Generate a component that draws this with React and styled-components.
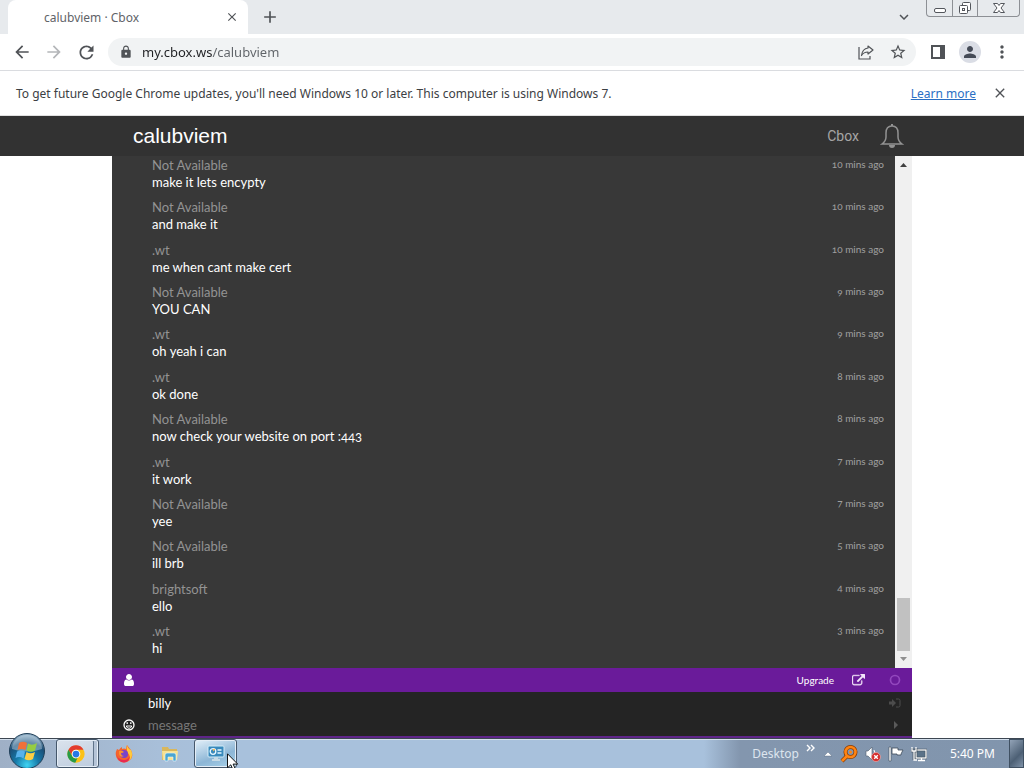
import React, { useState } from 'react';
import styled, { createGlobalStyle, css } from 'styled-components';
import {
  MdArrowBack,
  MdArrowForward,
  MdRefresh,
  MdLock,
  MdStarBorder,
  MdPerson,
  MdMoreVert,
  MdClose,
  MdAdd,
  MdKeyboardArrowDown,
} from 'react-icons/md';

const messages = [
  { id: 1, name: 'Not Available', text: 'make it lets encypty', time: '10 mins ago' },
  { id: 2, name: 'Not Available', text: 'and make it', time: '10 mins ago' },
  { id: 3, name: '.wt', text: 'me when cant make cert', time: '10 mins ago' },
  { id: 4, name: 'Not Available', text: 'YOU CAN', time: '9 mins ago' },
  { id: 5, name: '.wt', text: 'oh yeah i can', time: '9 mins ago' },
  { id: 6, name: '.wt', text: 'ok done', time: '8 mins ago' },
  { id: 7, name: 'Not Available', text: 'now check your website on port :443', time: '8 mins ago' },
  { id: 8, name: '.wt', text: 'it work', time: '7 mins ago' },
  { id: 9, name: 'Not Available', text: 'yee', time: '7 mins ago' },
  { id: 10, name: 'Not Available', text: 'ill brb', time: '5 mins ago' },
  { id: 11, name: 'brightsoft', text: 'ello', time: '4 mins ago' },
  { id: 12, name: '.wt', text: 'hi', time: '3 mins ago' },
];

const Browser = () => {
  const [url, setUrl] = useState('my.cbox.ws/calubviem');

  return (
    <>
      <TabStrip>
        <Tab>
          <TabTitle>calubviem · Cbox</TabTitle>
          <IconButton aria-label="Close tab" $size={16}><MdClose size={14} /></IconButton>
        </Tab>
        <NewTab aria-label="New tab" $size={28}><MdAdd size={20} /></NewTab>
        <TabSearch aria-label="Search tabs" $size={24}><MdKeyboardArrowDown size={18} /></TabSearch>
        <WindowButtons>
          <WindowButton aria-label="Minimize">
            <svg width="14" height="16" fill="#fff" stroke="#53565c">
              <rect x="1.5" y="8.5" width="11" height="4" rx="1.5" />
            </svg>
          </WindowButton>
          <WindowButton aria-label="Restore">
            <svg width="14" height="16" fill="#fff" stroke="#53565c">
              <rect x="4.5" y="2.5" width="8" height="8" rx="1" />
              <rect x="1.5" y="5.5" width="8" height="8" rx="1" />
              <rect x="4.5" y="8.5" width="2" height="2" />
            </svg>
          </WindowButton>
          <WindowButton aria-label="Close" $wide>
            <svg width="14" height="16" fill="#fff" stroke="#53565c">
              <path d="M1.500 3.500h4L7 5.500l1.500-2h4L9 8l3.500 4.500h-4L7 10.500l-1.500 2h-4L5 8z" />
            </svg>
          </WindowButton>
        </WindowButtons>
      </TabStrip>
      <Toolbar>
        <IconButton aria-label="Back" $size={32}><MdArrowBack size={20} /></IconButton>
        <IconButton aria-label="Forward" $size={32} $dim><MdArrowForward size={20} /></IconButton>
        <IconButton aria-label="Reload" $size={32}><MdRefresh size={21} /></IconButton>
        <AddressBar>
          <MdLock size={14} />
          <AddressInput aria-label="Address" value={url} onChange={(e) => setUrl(e.target.value)} />
          <IconButton aria-label="Share" $size={32}>
            <svg width="18" height="18" fill="none" stroke="currentColor" strokeWidth="1.2">
              <path d="M2 4v12h11v-3" />
              <path d="M11 3 16 7 11 11V9C8 9 6 10 4.500 12.500 5 8.500 7 5.500 11 5z" strokeLinejoin="round" />
            </svg>
          </IconButton>
          <IconButton aria-label="Bookmark" $size={32}><MdStarBorder size={18} /></IconButton>
        </AddressBar>
        <IconButton aria-label="Side panel" $size={32}>
          <svg width="16" height="14" fill="currentColor">
            <path d="M1 0h14v14H1zM3 2v10h7V2z" fillRule="evenodd" />
          </svg>
        </IconButton>
        <Avatar aria-label="Profile" $size={22}><MdPerson size={18} /></Avatar>
        <IconButton aria-label="Menu" $size={32}><MdMoreVert size={20} /></IconButton>
      </Toolbar>
      <InfoBar>
        <span>
          To get future Google Chrome updates, you'll need Windows 10 or later. This computer is using Windows 7.
        </span>
        <LearnMore href="#learn">Learn more</LearnMore>
        <IconButton aria-label="Dismiss" $size={16}><MdClose size={18} /></IconButton>
      </InfoBar>
    </>
  );
};

const Chat = () => {
  const [name, setName] = useState('billy');
  const [message, setMessage] = useState('');

  return (
    <ChatBox>
      <MessageArea>
        <MessageList>
          {messages.map((m) => (
            <Message key={m.id}>
              <Author>{m.name}</Author>
              <Time>{m.time}</Time>
              <Body>{m.text}</Body>
            </Message>
          ))}
        </MessageList>
        <ScrollTrack>
          <ScrollArrow><path d="M5 11 8.500 7 12 11z" fill="#404040" /></ScrollArrow>
          <ScrollThumb />
          <ScrollArrow><path d="M5 6h7l-3.500 4z" fill="#8f8f8f" /></ScrollArrow>
        </ScrollTrack>
      </MessageArea>
      <ActionBar>
        <PlainButton aria-label="Profile">
          <svg width="14" height="14" viewBox="0 0 1792 1792" fill="#fff">
            <path d="M1536 1399q0 109-62.500 187t-150.500 78h-854q-88 0-150.500-78t-62.500-187q0-85 8.500-160.500t31.500-152 58.500-131 94-89 134.500-34.500q131 128 313 128t313-128q76 0 134.500 34.500t94 89 58.500 131 31.500 152 8.500 160.500zm-256-887q0 159-112.500 271.500t-271.500 112.500-271.500-112.500-112.500-271.500 112.500-271.500 271.500-112.500 271.500 112.500 112.500 271.500z" />
          </svg>
        </PlainButton>
        <Upgrade href="#upgrade">Upgrade</Upgrade>
        <PlainButton aria-label="Open in new window">
          <svg width="13" height="13" viewBox="0 0 1792 1792" fill="#f3e6fa">
            <path d="M1408 928v320q0 119-84.500 203.500t-203.500 84.500h-832q-119 0-203.500-84.500t-84.500-203.500v-832q0-119 84.500-203.500t203.500-84.500h704q14 0 23 9t9 23v64q0 14-9 23t-23 9h-704q-66 0-113 47t-47 113v832q0 66 47 113t113 47h832q66 0 113-47t47-113v-320q0-14 9-23t23-9h64q14 0 23 9t9 23zm384-864v512q0 26-19 45t-45 19-45-19l-176-176-652 652q-10 10-23 10t-23-10l-114-114q-10-10-10-23t10-23l652-652-176-176q-19-19-19-45t19-45 45-19h512q26 0 45 19t19 45z" stroke="#f3e6fa" strokeWidth="50" />
          </svg>
        </PlainButton>
        <PlainButton aria-label="Status">
          <svg width="12" height="12" fill="none" stroke="#9247bd" strokeWidth="1.700">
            <circle cx="6" cy="6" r="4.500" />
          </svg>
        </PlainButton>
      </ActionBar>
      <PostForm onSubmit={(e) => e.preventDefault()}>
        <FormRow>
          <span />
          <Field aria-label="Name" value={name} onChange={(e) => setName(e.target.value)} />
          <PlainButton type="button" aria-label="Log in">
            <svg width="12" height="10" fill="#4c4c4c">
              <path d="M0 3.500h3V1l4 4-4 4V6.500H0z" />
              <path d="M7 1h2.500Q11 1 11 2.500v5Q11 9 9.500 9H7" fill="none" stroke="#4c4c4c" />
            </svg>
          </PlainButton>
        </FormRow>
        <FormRow>
          <SmileyButton type="button" aria-label="Smilies">
            <svg width="12" height="12" fill="none" stroke="#fff" strokeWidth="1.300">
              <circle cx="6" cy="6" r="5" />
              <path d="M3.200 7Q6 7 8.800 7 8 9.300 6 9.300T3.200 7z" strokeWidth="1" />
              <path d="M4.200 3.300v1.800M7.800 3.300v1.800" />
            </svg>
          </SmileyButton>
          <Field
            aria-label="Message"
            placeholder="message"
            value={message}
            onChange={(e) => setMessage(e.target.value)}
          />
          <PlainButton aria-label="Send">
            <svg width="6" height="10" fill="#5a5a5a"><path d="M2 1l4 4-4 4z" /></svg>
          </PlainButton>
        </FormRow>
      </PostForm>
    </ChatBox>
  );
};

const StartOrb = () => (
  <svg width="38" height="38" viewBox="0 0 38 38">
    <defs>
      <radialGradient id="orb" cx="50%" cy="90%" r="85%">
        <stop offset="0" stopColor="#3fd4f2" />
        <stop offset=".4" stopColor="#1679a8" />
        <stop offset=".75" stopColor="#1c4f78" />
        <stop offset="1" stopColor="#8aa9c0" />
      </radialGradient>
    </defs>
    <circle cx="19" cy="19" r="17.500" fill="url(#orb)" stroke="#203f58" />
    <path d="M4 17a15 14 0 0 1 30 0q-15 5-30 0z" fill="#dcecf5" opacity=".4" />
    <path d="M11 11q4-2.500 8 0l-1.500 7q-4-2-8 0z" fill="#f0713a" />
    <path d="M20 11.500q4 2.500 9-.5l-2 7.500q-4 2.500-8.500 0z" fill="#96cd43" />
    <path d="M9 19.500q4-2 8 0l-1.500 7q-4-2.500-8-.5z" fill="#58b2ec" />
    <path d="M18.500 20q4 2.500 8.500 0l-2 7q-4 2.500-8.500 0z" fill="#fdce43" />
  </svg>
);

const ChromeLogo = () => (
  <svg width="18" height="18" viewBox="0 0 48 48">
    <circle cx="24" cy="24" r="23" fill="#fbc116" />
    <path d="M4 12.500A23 23 0 0 1 44 12.500H24a11.500 11.500 0 0 0-10 17.200z" fill="#e33b2e" />
    <path d="M4 12.500 14 29.700A11.500 11.500 0 0 0 28 34.800L22 47A23 23 0 0 1 4 12.500z" fill="#269b48" />
    <circle cx="24" cy="24" r="11.500" fill="#fff" />
    <circle cx="24" cy="24" r="9" fill="#2878e6" />
  </svg>
);

const FirefoxLogo = () => (
  <svg width="18" height="18" viewBox="0 0 18 18">
    <path d="M2 4l2 1q1-2 3-3l0 2q2-1 4 0 0-2 1-4 2 3 4 5 3 7-1 10-6 5-12 0Q-1 10 2 4z" fill="#f5642c" />
    <path d="M12 0q1 4 4 5 3 7-2 11 2-5-1-8-2-3-1-8z" fill="#ffc93a" />
    <path d="M1 7q1 8 8 8 4 0 6-4-1 6-6 6.500Q2 17 1 7z" fill="#e92b52" />
    <circle cx="9" cy="9" r="4" fill="#7944c9" />
    <path d="M4 6q3-1 5 1-1 1-3 1 0 3 3 3-4 2-5-2z" fill="#fa9230" />
  </svg>
);

const ExplorerLogo = () => (
  <svg width="18" height="16" viewBox="0 0 18 16">
    <path d="M1 1h6l1 2h8v11H1z" fill="#d9b75c" />
    <path d="M1 5h16l-1 9H2z" fill="#f7e293" />
    <path d="M4 15V9q0-2 2-2h7q2 0 2 2v6h-3v-4H7v4z" fill="#4aa5d0" stroke="#eaf8ff" strokeWidth=".6" />
  </svg>
);

const ControlPanelLogo = () => (
  <svg width="18" height="17" viewBox="0 0 18 17">
    <rect x="1" y="1" width="16" height="11" rx="1" fill="#398abc" stroke="#d6eef9" />
    <circle cx="6" cy="6.500" r="2.800" fill="none" stroke="#e8f7ff" strokeWidth="1.300" />
    <path d="M6 6.500V4h2.500z" fill="#ffb94a" />
    <path d="M10.500 5h4M10.500 8h4" stroke="#e8f7ff" strokeWidth="1.300" />
    <path d="M7 12h4v2h2v2H5v-2h2z" fill="#c8dbe6" />
  </svg>
);

const Taskbar = () => (
  <Bar>
    <StartButton aria-label="Start"><StartOrb /></StartButton>
    <Tasks>
      <TaskButton aria-label="Google Chrome" $open $stacked><ChromeLogo /></TaskButton>
      <TaskButton aria-label="Firefox"><FirefoxLogo /></TaskButton>
      <TaskButton aria-label="Explorer"><ExplorerLogo /></TaskButton>
      <TaskButton aria-label="Control Panel" $open $active>
        <ControlPanelLogo />
        <Cursor width="12" height="18" viewBox="0 0 12 18">
          <path d="M.5.8v14l3.300-3 2.300 5.300 2.300-1-2.300-5h4.600z" fill="#fff" stroke="#111" />
        </Cursor>
      </TaskButton>
    </Tasks>
    <Tray>
      <DesktopLabel>Desktop</DesktopLabel>
      <TrayButton aria-label="More toolbars" $top>
        <svg width="9" height="8" fill="none" stroke="#fff" strokeWidth="1.400"><path d="M1 1l3 3-3 3M5 1l3 3-3 3" /></svg>
      </TrayButton>
      <TrayButton aria-label="Show hidden icons">
        <svg width="8" height="6" fill="#fff"><path d="M0 5l4-4 4 4z" stroke="#4d6177" strokeWidth=".4" /></svg>
      </TrayButton>
      <TrayButton aria-label="Search tool">
        <svg width="18" height="18" fill="none">
          <circle cx="10.500" cy="7" r="5" stroke="#8a3b00" strokeWidth="4" />
          <path d="M7 11l-5 5" stroke="#8a3b00" strokeWidth="4" />
          <circle cx="10.500" cy="7" r="5" stroke="#ff8412" strokeWidth="2.600" />
          <path d="M7 11l-5 5" stroke="#ff8412" strokeWidth="2.600" />
          <circle cx="10.500" cy="7" r="1.500" fill="#ff8412" />
        </svg>
      </TrayButton>
      <TrayButton aria-label="Volume">
        <svg width="16" height="16" fill="none">
          <path d="M1 5h2l4-4v13l-4-4H1z" fill="#fff" stroke="#4e5d6c" strokeWidth=".6" />
          <path d="M9 4q2 3 0 7" stroke="#fff" />
          <circle cx="11" cy="11" r="4.500" fill="#d42d2d" stroke="#f7b8b3" strokeWidth=".6" />
          <path d="M9.200 9.200l3.600 3.600m0-3.600l-3.600 3.600" stroke="#fff" strokeWidth="1.400" />
        </svg>
      </TrayButton>
      <TrayButton aria-label="Action center">
        <svg width="16" height="16">
          <path d="M1 1h2v14H1z" fill="#fff" stroke="#3c4a58" strokeWidth=".6" />
          <path d="M4 2h6v2h5l-2 4v1H9V8H4z" fill="#fff" stroke="#3c4a58" strokeWidth=".8" />
        </svg>
      </TrayButton>
      <TrayButton aria-label="Network">
        <svg width="16" height="16" fill="none">
          <rect x="5" y="4" width="10" height="8" fill="#5b7288" stroke="#3c4a58" strokeWidth="2.400" />
          <rect x="5" y="4" width="10" height="8" stroke="#fff" strokeWidth="1.300" />
          <path d="M7 14.500h7M10.500 12v2" stroke="#fff" strokeWidth="1.300" />
          <path d="M1 2v3h4V2M3 5v9" stroke="#3c4a58" strokeWidth="2.600" />
          <path d="M1 1v4h4V1M3 5v9h3" stroke="#fff" strokeWidth="1.300" />
        </svg>
      </TrayButton>
      <Clock>5:40 PM</Clock>
      <ShowDesktop aria-label="Show desktop" />
    </Tray>
  </Bar>
);

const App = () => (
  <>
    <GlobalStyle />
    <Screen>
      <Browser />
      <SiteHeader>
        <SiteInner>
          <SiteTitle>calubviem</SiteTitle>
          <SiteLink href="#cbox">Cbox</SiteLink>
          <PlainButton aria-label="Notifications">
            <svg width="24" height="26" fill="none" stroke="#929292" strokeWidth="1.500">
              <path d="M12 3C7 3 6 7 6 10v4q0 4-4 7h20q-4-3-4-7v-4c0-3-1-7-6-7z" />
              <path d="M12 1v2" strokeWidth="2" />
              <path d="M9 22q0 3 3 3t3-3z" fill="#929292" stroke="none" />
            </svg>
          </PlainButton>
        </SiteInner>
      </SiteHeader>
      <Chat />
      <Taskbar />
    </Screen>
  </>
);

const GlobalStyle = createGlobalStyle`
  * {
    box-sizing: border-box;
  }
  body {
    margin: 0;
    overflow: hidden;
    background: #fff;
    font-family: 'Noto Sans', sans-serif;
    font-size: 12px;
  }
  button, input {
    font: inherit;
    border: none;
    padding: 0;
    background: none;
  }
`

const Screen = styled.div`
  height: 100vh;
  display: flex;
  flex-direction: column;
`

const center = css`
  display: flex;
  align-items: center;
  justify-content: center;
`

const PlainButton = styled.button`
  ${center}
`

const SmileyButton = styled(PlainButton)`
  justify-self: start;
`

const IconButton = styled.button`
  ${center}
  flex: none;
  width: ${(props) => props.$size}px;
  height: ${(props) => props.$size}px;
  color: ${(props) => (props.$dim ? '#b4b6b9' : '#505357')};
`

const TabStrip = styled.div`
  display: flex;
  height: 34px;
  flex: none;
  padding-left: 8px;
  background: #e7eaed;
`

const Tab = styled.div`
  display: flex;
  align-items: center;
  width: 240px;
  padding: 0 8px 0 36px;
  background: #fff;
  border-radius: 8px 8px 0 0;
`

const TabTitle = styled.span`
  flex: 1;
  color: #5f6368;
`

const NewTab = styled(IconButton)`
  align-self: center;
  margin-left: 8px;
`

const TabSearch = styled(IconButton)`
  align-self: center;
  margin-left: auto;
`

const WindowButtons = styled.div`
  display: flex;
  height: 17px;
  margin: 0 4px 0 10px;
  border: 1px solid #8d9095;
  border-top: none;
  border-radius: 0 0 4px 4px;
`

const WindowButton = styled.button`
  ${center}
  width: ${(props) => (props.$wide ? '42px' : '25px')};
  & + & {
    border-left: 1px solid #8d9095;
  }
`

const Toolbar = styled.div`
  display: flex;
  align-items: center;
  flex: none;
  height: 37px;
  padding: 0 6px;
  background: #fff;
  border-bottom: 1px solid #dadce0;
`

const AddressBar = styled.div`
  display: flex;
  align-items: center;
  flex: 1;
  height: 28px;
  margin: 0 6px;
  padding: 0 2px 0 11px;
  background: #f1f3f4;
  border-radius: 14px;
  color: #505357;
`

const AddressInput = styled.input`
  flex: 1;
  min-width: 0;
  margin-left: 9px;
  font-size: 13px;
  color: transparent;
  background: linear-gradient(90deg, #202124 70px, #5f6368 70px);
  background-clip: text;
`

const Avatar = styled(IconButton)`
  margin: 0 5px;
  border-radius: 50%;
  background: #dadde5;
  color: #454b57;
`

const InfoBar = styled.div`
  display: flex;
  align-items: center;
  flex: none;
  height: 45px;
  padding: 0 16px;
  gap: 16px;
  border-bottom: 1px solid #e0e0e0;
  background: #fff;
  color: #3c4043;
`

const LearnMore = styled.a`
  margin-left: auto;
  color: #2a6fc4;
`

const SiteHeader = styled.header`
  flex: none;
  background: #323232;
`

const SiteInner = styled.div`
  display: flex;
  align-items: center;
  max-width: 800px;
  height: 40px;
  margin: 0 auto;
  padding: 0 8px 0 21px;
  font-family: 'Liberation Sans', Arial, sans-serif;
`

const SiteTitle = styled.h1`
  flex: 1;
  margin: 0;
  font-size: 21px;
  font-weight: normal;
  color: #fff;
`

const SiteLink = styled.a`
  margin-right: 21px;
  font-size: 14px;
  font-family: Roboto, sans-serif;
  color: #a6a6a6;
  text-decoration: none;
`

const ChatBox = styled.main`
  display: flex;
  flex-direction: column;
  flex: 1;
  min-height: 0;
  width: 100%;
  max-width: 800px;
  margin: 0 auto;
  background: #242424;
  border-bottom: 2px solid #5f2489;
  font-family: Lato, sans-serif;
  font-size: 13px;
`

const MessageArea = styled.div`
  display: flex;
  flex: 1;
  min-height: 0;
  background: #383838;
`

const MessageList = styled.ul`
  display: flex;
  flex-direction: column;
  justify-content: space-between;
  flex: 1;
  margin: 0;
  padding: 1px 11px 11px 40px;
  list-style: none;
`

const Message = styled.li`
  display: grid;
  grid-template-columns: 1fr auto;
  line-height: 17px;
`

const Author = styled.span`
  color: #939393;
`

const Time = styled.time`
  font-size: 10px;
  line-height: 14px;
  font-variant-numeric: oldstyle-nums;
  color: #a0a0a0;
`

const Body = styled.p`
  grid-column: 1 / -1;
  margin: 0;
  color: #fff;
  font-variant-numeric: oldstyle-nums;
`

const ScrollTrack = styled.div`
  display: flex;
  flex-direction: column;
  justify-content: flex-end;
  width: 17px;
  background: #f0f0f0;
  & > :first-child {
    margin-bottom: auto;
  }
`

const ScrollArrow = styled.svg`
  width: 17px;
  height: 17px;
`

const ScrollThumb = styled.div`
  height: 53px;
  margin: 0 2px;
  background: #c1c1c1;
`

const ActionBar = styled.div`
  display: flex;
  align-items: center;
  flex: none;
  height: 24px;
  padding: 0 11px 0 10px;
  background: #6a1b9a;
  & > :nth-child(3) {
    margin: 0 24px 0 18px;
  }
`

const Upgrade = styled.a`
  margin-left: auto;
  font-size: 10px;
  color: #fff;
  text-decoration: none;
`

const PostForm = styled.form`
  flex: none;
`

const FormRow = styled.div`
  display: grid;
  grid-template-columns: 24px 1fr 12px;
  align-items: center;
  column-gap: 1px;
  height: 22px;
  padding: 0 11px;
`

const Field = styled.input`
  width: 100%;
  color: #fff;
  &::placeholder {
    color: #777;
    opacity: 1;
  }
`

const Bar = styled.footer`
  display: flex;
  flex: none;
  height: 30px;
  border-top: 1px solid #3c4652;
  box-shadow: inset 0 1px #d3dfec;
  background: linear-gradient(90deg, #9fb0c6 0, #a8bfd9 160px, #a8c1dc 240px, #a8c1dc calc(100% - 320px), #8396ae calc(100% - 284px), #8195ad 100%);
`

const StartButton = styled.button`
  ${center}
  width: 38px;
  height: 38px;
  margin: -7px 10px 0 8px;
`

const Tasks = styled.div`
  display: flex;
  gap: 3px;
`

const TaskButton = styled.button`
  ${center}
  position: relative;
  width: 43px;
  height: 29px;
  ${(props) => props.$open && css`
    border: 1px solid #45576b;
    border-radius: 3px;
    background: ${props.$active
      ? 'linear-gradient(160deg, #e3f0fa, #8db6d6 60%, #a9d3ea)'
      : 'linear-gradient(160deg, #dbe3ed, #bccbdd)'};
    box-shadow: inset 0 0 0 1px #e4edf6;
  `}
  ${(props) => props.$stacked && css`
    padding-right: 4px;
    box-shadow: inset 0 0 0 1px #e4edf6, inset -4px 0 #b5c4d7, inset -5px 0 #60748a;
  `}
`

const Cursor = styled.svg`
  position: absolute;
  left: 32px;
  top: 13px;
`

const Tray = styled.div`
  display: flex;
  align-items: center;
  gap: 7px;
  margin-left: auto;
`

const DesktopLabel = styled.span`
  color: #dde5ee;
`

const TrayButton = styled.button`
  ${center}
  min-width: 10px;
  ${(props) => props.$top && css`
    align-self: flex-start;
    padding-top: 5px;
  `}
`

const Clock = styled.time`
  margin: 0 7px 0 16px;
  color: #fff;
`

const ShowDesktop = styled.button`
  width: 15px;
  height: 29px;
  border: 1px solid #3f5062;
  background: linear-gradient(135deg, #92a3b7, #4d6075 60%, #7f92a8);
`

export default App;
